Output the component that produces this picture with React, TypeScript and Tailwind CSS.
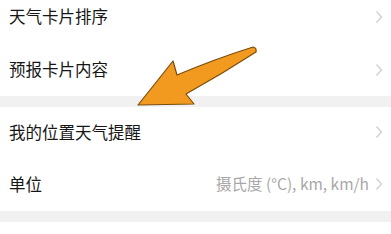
import React from 'react';

const FONT = { fontFamily: '"Noto Sans CJK SC", "Noto Sans", sans-serif' };

function Chevron() {
  return (
    <svg width="8" height="14" viewBox="0 0 8 14" className="shrink-0">
      <path d="M1.5 1.5 L6.5 7 L1.5 12.5" fill="none" stroke="#cfcfcf" strokeWidth="1.3" />
    </svg>
  );
}

function Row({ label, value, className }: { label: string; value?: string; className: string }) {
  return (
    <div className={`flex items-center justify-between pl-[9px] pr-[8px] bg-white ${className}`}>
      <span className="text-[16.5px] text-[#161616] leading-none">{label}</span>
      <div className="flex items-center gap-[6px]">
        {value && <span className="text-[15.5px] text-[#a8a8a8] leading-none">{value}</span>}
        <Chevron />
      </div>
    </div>
  );
}

export default function App() {
  return (
    <div className="relative w-[391px] h-[234px] overflow-hidden bg-white" style={FONT}>
      <Row label="天气卡片排序" className="h-[43px] pb-[10px]" />
      <Row label="预报卡片内容" className="h-[53px]" />
      <div className="h-[11px] bg-[#f1f1f1]" />
      <Row label="我的位置天气提醒" className="h-[50px]" />
      <Row label="单位" value="摄氏度 (°C), km, km/h" className="h-[54px]" />
      <div className="h-[11px] bg-[#f1f1f1]" />

      <svg className="absolute left-0 top-0 pointer-events-none" width="391" height="234" viewBox="0 0 391 234">
        <path
          d="M253 47 Q257 48 256 52 Q222 74 186 94 L194 104 L138 105 L173 61 L177 75 Q215 59 253 47 Z"
          fill="#f29a1f"
          stroke="#7a4d0c"
          strokeWidth="1.2"
          strokeLinejoin="round"
        />
      </svg>
    </div>
  );
}
